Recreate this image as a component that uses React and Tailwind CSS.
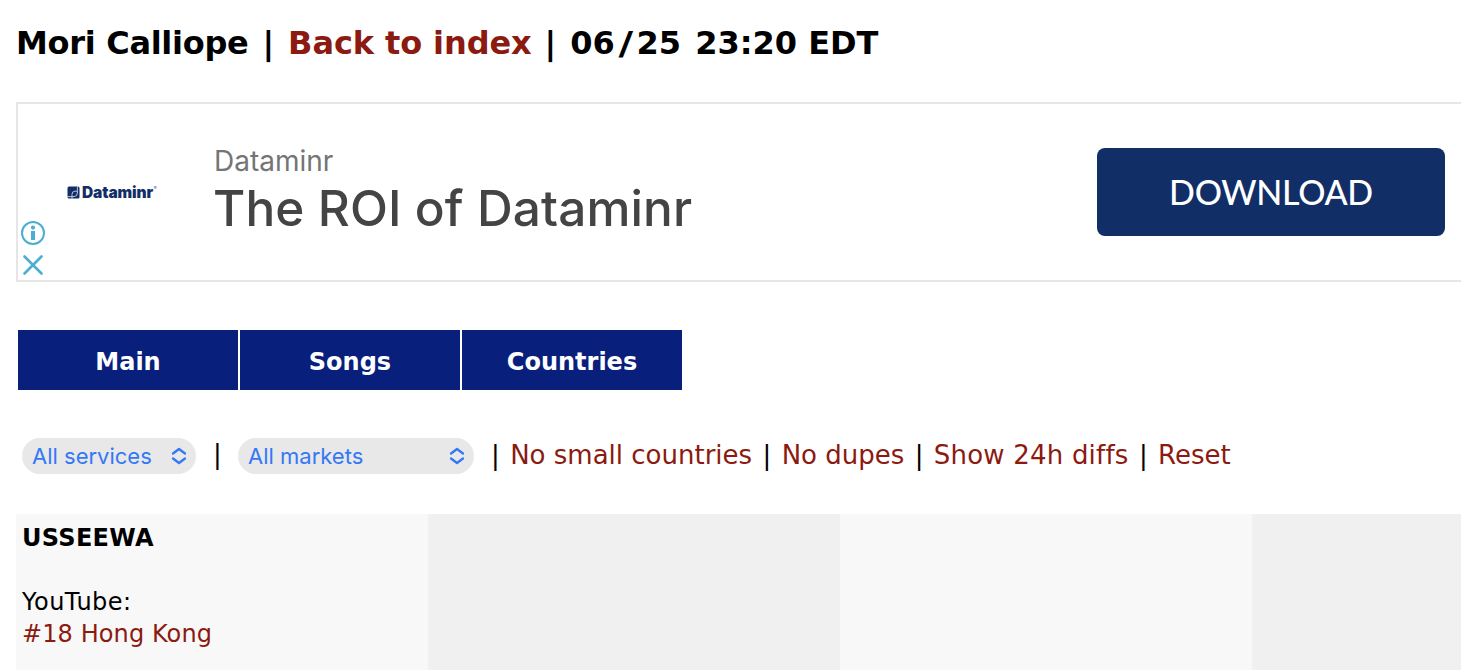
import React from 'react'

const navItems = ['Main', 'Songs', 'Countries']

const filters = [
  { label: 'No small countries', tracking: 'tracking-[0px]' },
  { label: 'No dupes', tracking: 'tracking-[0px]' },
  { label: 'Show 24h diffs', tracking: 'tracking-[0.2px]' },
  { label: 'Reset', tracking: 'tracking-[0px]' },
]

function Chevrons() {
  return (
    <svg width="16" height="18" viewBox="0 0 16 18" fill="none" stroke="#3478f6" strokeWidth="2.3" strokeLinecap="round" strokeLinejoin="round">
      <path d="M2 6.5 8 2l6 4.5M2 11.5 8 16l6-4.5" />
    </svg>
  )
}

function SelectPill({ label, width }) {
  return (
    <button
      type="button"
      className={`${width} flex h-9 shrink-0 items-center justify-between rounded-full bg-[#e8e8e8] pr-[9px] pl-[10px] font-['Inter',sans-serif] text-[22px] leading-9 text-[#3478f6]`}
    >
      <span>{label}</span>
      <Chevrons />
    </button>
  )
}

function AdBanner() {
  return (
    <div className="flex h-[180px] border-2 border-r-0 border-[#e6e6e6]">
      {/* ad choices */}
      <div className="flex w-[30px] flex-col items-center justify-end gap-[8px] pb-[4px]">
        <svg width="26" height="26" viewBox="0 0 26 26">
          <circle cx="13" cy="13" r="11" fill="none" stroke="#4aafd0" strokeWidth="2" />
          <circle cx="13" cy="7.6" r="2.1" fill="#4aafd0" />
          <rect x="11" y="11" width="4" height="9" fill="#4aafd0" />
        </svg>
        <svg width="22" height="22" viewBox="0 0 22 22" stroke="#4aafd0" strokeWidth="2.6" strokeLinecap="round">
          <path d="M2.5 2.5l17 17M19.5 2.5l-17 17" />
        </svg>
      </div>

      {/* logo */}
      <div className="ml-[19px] flex w-[146px] items-center gap-[2px] text-[#112e66]">
        <svg width="13" height="13" viewBox="0 0 13 13" fill="none">
          <rect x="0.5" y="0.5" width="12" height="12" rx="1.5" fill="#112e66" />
          <path d="M5 13V8.2Q5 5.2 8 5.2H10.4M0 10.6H7Q10.4 10.6 10.4 7V0" stroke="#c9d0df" strokeWidth="0.9" />
        </svg>
        <div className="flex items-start pt-[2px]">
          <span className="font-['Inter',sans-serif] text-[15.5px] leading-5 font-black tracking-[-0.1px]">Dataminr</span>
          <span className="text-[4px] leading-[10px]">®</span>
        </div>
      </div>

      <div className="w-[884px] pt-[39px] font-['Inter',sans-serif] whitespace-nowrap">
        <p className="pl-px text-[28px] leading-[36px] text-[#757575]">Dataminr</p>
        <p className="text-[49.5px] leading-[59px] font-medium tracking-[0.1px] text-[#444444]">The ROI of Dataminr</p>
      </div>

      <button type="button" className="mt-11 h-[88px] w-[348px] rounded-lg bg-[#112e66] pb-[2px] font-['Lato',sans-serif] text-[34px] font-medium tracking-[-0.3px] text-white">
        DOWNLOAD
      </button>
    </div>
  )
}

function App() {
  return (
    <div className="h-[670px] overflow-hidden bg-white pl-4 font-['DejaVu_Sans',Verdana,sans-serif] text-black">
      <h1 className="flex h-[102px] pt-[23px] text-[32px] leading-10 font-bold whitespace-nowrap">
        <span className="tracking-[-0.3px]">Mori Calliope</span>
        <span className="ml-[14px]">|</span>
        <a href="#" className="ml-[14px] tracking-[-0.1px] text-[#8b1a10]">Back to index</a>
        <span className="ml-[13px]">|</span>
        <span className="ml-[14px]">
          06<span className="mx-[5px] inline-block scale-x-125">/</span>25
          <span className="ml-[3px]"> 23:20 EDT</span>
        </span>
      </h1>

      <AdBanner />

      <nav className="mt-12 ml-[2px] flex gap-[2px]">
        {navItems.map((item) => (
          <a key={item} href="#" className="flex h-[60px] w-[220px] items-center justify-center bg-[#081f7c] pt-[3px] text-[24px] leading-8 font-bold text-white">
            {item}
          </a>
        ))}
      </nav>

      <div className="mt-12 ml-[6px] flex h-9 items-center text-[26px] whitespace-nowrap">
        <SelectPill label="All services" width="w-[174px]" />
        <span className="w-[42px] pb-[3px] pl-[17px]">|</span>
        <SelectPill label="All markets" width="w-[236px]" />
        <div className="ml-[17px] flex gap-[10.4px] pb-[2px]">
          {filters.map(({ label, tracking }) => (
            <React.Fragment key={label}>
              <span>|</span>
              <a href="#" className={`${tracking} text-[#8b1a10]`}>{label}</a>
            </React.Fragment>
          ))}
        </div>
      </div>

      <div className="mt-10 flex h-[156px] text-[24px] leading-8">
        <div className="w-[412px] shrink-0 bg-[#f8f8f8] pt-2 pl-[6px]">
          <p className="mb-8 font-bold tracking-[0.3px]">USSEEWA</p>
          <p className="tracking-[0.5px]">YouTube:</p>
          <a href="#" className="tracking-[0.1px] text-[#8b1a10]">#18 Hong Kong</a>
        </div>
        <div className="w-[412px] shrink-0 bg-[#f0f0f0]" />
        <div className="w-[412px] shrink-0 bg-[#f8f8f8]" />
        <div className="w-[412px] shrink-0 bg-[#f0f0f0]" />
      </div>
    </div>
  )
}

export default App
